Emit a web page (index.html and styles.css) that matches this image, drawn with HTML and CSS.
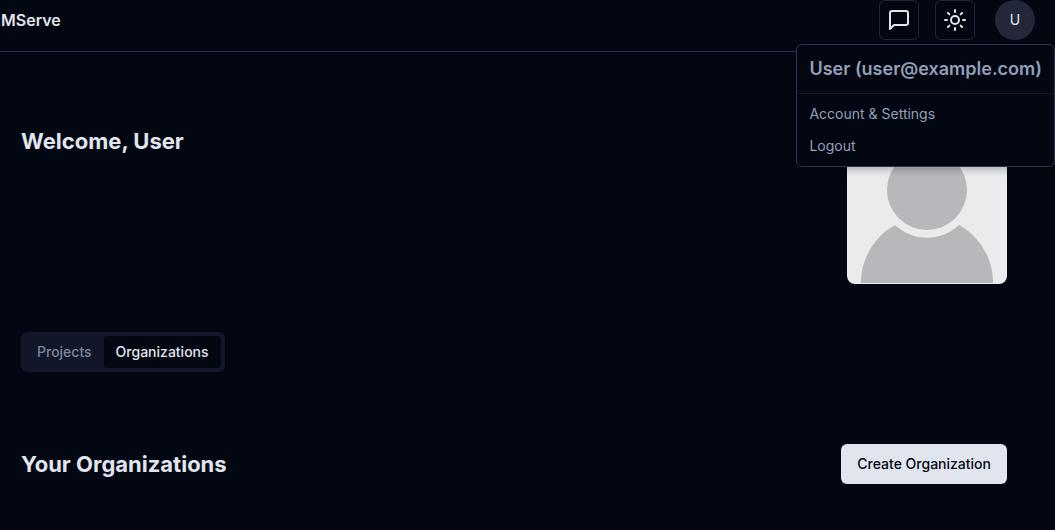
FILE: index.html
```html
<!DOCTYPE html>
<html lang="en">
<head>
  <meta charset="UTF-8">
  <meta name="viewport" content="width=device-width, initial-scale=1.0">
  <title>MServe</title>
  <link rel="stylesheet" href="styles.css">
</head>
<body>
  <header class="navbar">
    <a href="#" class="brand">MServe</a>
    <div class="nav-actions">
      <button type="button" class="icon-btn" aria-label="Messages">
        <svg width="24" height="24" viewBox="0 0 24 24" fill="none" stroke="currentColor" stroke-width="2" stroke-linecap="round" stroke-linejoin="round">
          <path d="M21 15a2 2 0 0 1-2 2H7l-4 4V5a2 2 0 0 1 2-2h14a2 2 0 0 1 2 2z"/>
        </svg>
      </button>
      <button type="button" class="icon-btn" aria-label="Toggle theme">
        <svg width="24" height="24" viewBox="0 0 24 24" fill="none" stroke="currentColor" stroke-width="2" stroke-linecap="round" stroke-linejoin="round">
          <circle cx="12" cy="12" r="4"/>
          <path d="M12 2v2M12 20v2M4.93 4.93l1.41 1.41M17.66 17.66l1.41 1.41M2 12h2M20 12h2M6.34 17.66l-1.41 1.41M19.07 4.93l-1.41 1.41"/>
        </svg>
      </button>
      <button type="button" class="avatar-btn" id="menu-btn" aria-expanded="true">U</button>
    </div>
    <div class="user-menu" id="user-menu">
      <h3>User (user@example.com)</h3>
      <nav class="menu-links">
        <a href="#">Account &amp; Settings</a>
        <a href="#">Logout</a>
      </nav>
    </div>
  </header>

  <main class="content">
    <section class="welcome">
      <h2>Welcome, User</h2>
      <svg class="profile-pic" viewBox="0 0 160 160" role="img" aria-label="Profile picture">
        <rect width="160" height="160" fill="#ebebed"/>
        <circle cx="80" cy="66" r="40" fill="#b8b7bb"/>
        <path d="M48 101C28 112 14 134 14 158V159H146V158C146 134 132 112 112 101C94 118 66 118 48 101Z" fill="#b8b7bb"/>
      </svg>
    </section>

    <div class="tabs">
      <button type="button">Projects</button>
      <button type="button" class="active">Organizations</button>
    </div>

    <section class="orgs">
      <h2>Your Organizations</h2>
      <button type="button" class="create-btn">Create Organization</button>
    </section>
  </main>

  <script>
    const menuBtn = document.getElementById('menu-btn');
    const menu = document.getElementById('user-menu');

    menuBtn.addEventListener('click', () => {
      menu.hidden = !menu.hidden;
      menuBtn.setAttribute('aria-expanded', !menu.hidden);
    });
  </script>
</body>
</html>
```
FILE: styles.css
```css
* {
  margin: 0;
  padding: 0;
  box-sizing: border-box;
  font-family: 'Inter', sans-serif;
}
body {
  background: #030711;
  color: #e1e5ee;
  font-size: 14px;
  line-height: 20px;
}
button {
  border: none;
  font-size: 14px;
  line-height: 20px;
  font-weight: 500;
  cursor: pointer;
}
a {
  text-decoration: none;
}
h2 {
  font-size: 22px;
  line-height: 34px;
  font-weight: 700;
}
.navbar {
  position: relative;
  display: flex;
  justify-content: space-between;
  align-items: center;
  padding: 0 20px 11px 1px;
  border-bottom: 1px solid #2a3552;
}
.brand {
  color: #e1e5ee;
  font-size: 16px;
  line-height: 24px;
  font-weight: 600;
}
.nav-actions {
  display: flex;
  gap: 16px;
}
.icon-btn {
  display: flex;
  align-items: center;
  justify-content: center;
  width: 40px;
  height: 40px;
  background: transparent;
  color: #e1e5ee;
  border: 1px solid #1f2538;
  border-radius: 6px;
}
.avatar-btn {
  width: 40px;
  height: 40px;
  margin-left: 4px;
  border-radius: 50%;
  background: #22283a;
  color: #e1e5ee;
  font-weight: 400;
}
.user-menu {
  position: absolute;
  top: 44px;
  right: 0;
  z-index: 10;
  background: #030711;
  color: #94a0b8;
  border: 1px solid #2a3552;
  border-radius: 6px;
  box-shadow: 0 4px 6px rgba(0, 0, 0, 0.2);
}
.user-menu h3 {
  padding: 10px 12px;
  font-size: 18px;
  line-height: 28px;
  font-weight: 600;
  border-bottom: 1px solid #12182a;
}
.menu-links {
  padding: 4px 0;
}
.menu-links a {
  display: block;
  padding: 6px 12px;
  color: #94a0b8;
}
.content {
  padding: 72px 48px 48px 21px;
}
.welcome {
  display: flex;
  justify-content: space-between;
  align-items: flex-start;
}
.profile-pic {
  width: 160px;
  height: 160px;
  border-radius: 8px;
}
.tabs {
  display: inline-flex;
  margin-top: 48px;
  padding: 4px;
  border-radius: 6px;
  background: #111628;
}
.tabs button {
  padding: 6px 12px;
  border-radius: 4px;
  background: transparent;
  color: #7c869c;
}
.tabs .active {
  background: #030711;
  color: #e1e5ee;
}
.orgs {
  display: flex;
  justify-content: space-between;
  align-items: center;
  margin-top: 72px;
}
.create-btn {
  padding: 10px 16px;
  border-radius: 6px;
  background: #e1e5ee;
  color: #030711;
}
```
